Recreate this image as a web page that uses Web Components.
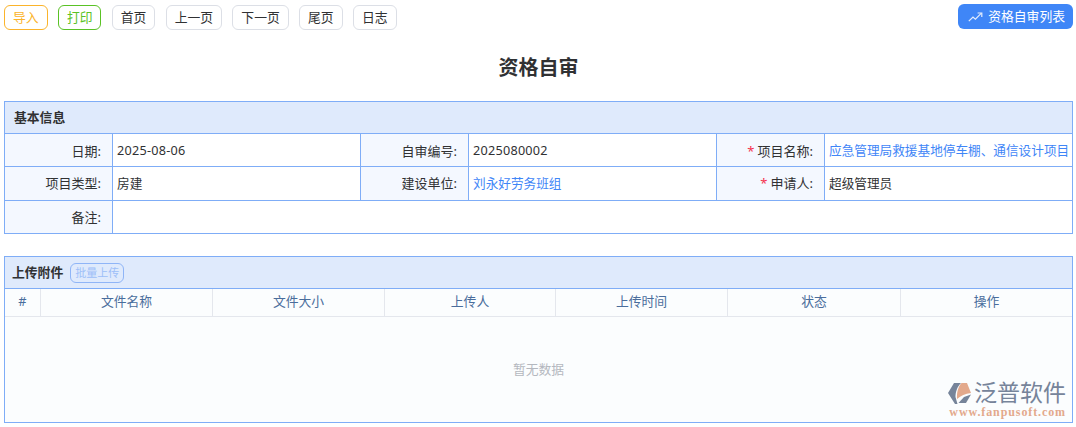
<!DOCTYPE html>
<html lang="zh">
<head>
<meta charset="utf-8">
<title>资格自审</title>
<style>
  html, body { margin: 0; background: #fff; }
  body {
    font: 12.8px/1.4 "Noto Sans", "Noto Sans CJK SC", sans-serif;
    color: #303133;
    height: 427px;
    overflow: hidden;
  }
</style>
</head>
<body>
<audit-page>
  <tool-bar>
    <tool-btn kind="warning">导入</tool-btn>
    <tool-btn kind="success">打印</tool-btn>
    <tool-btn>首页</tool-btn>
    <tool-btn>上一页</tool-btn>
    <tool-btn>下一页</tool-btn>
    <tool-btn>尾页</tool-btn>
    <tool-btn>日志</tool-btn>
    <list-btn slot="end">资格自审列表</list-btn>
  </tool-bar>
  <h-title>资格自审</h-title>
  <info-panel>
    <info-field label="日期" num first>2025-08-06</info-field>
    <info-field label="自审编号" num first>2025080002</info-field>
    <info-field label="项目名称" required link first>应急管理局救援基地停车棚、通信设计项目</info-field>
    <info-field label="项目类型">房建</info-field>
    <info-field label="建设单位" link>刘永好劳务班组</info-field>
    <info-field label="申请人" required>超级管理员</info-field>
    <info-field label="备注" wide></info-field>
  </info-panel>
  <upload-panel></upload-panel>
</audit-page>

<script>
class AuditPage extends HTMLElement {
  constructor() {
    super();
    this.attachShadow({ mode: 'open' }).innerHTML = `
      <style>
        :host { display: flex; flex-direction: column; padding: 4px 3px 0 4px; box-sizing: border-box; height: 427px; }
      </style>
      <slot></slot>`;
  }
}

class ToolBar extends HTMLElement {
  constructor() {
    super();
    this.attachShadow({ mode: 'open' }).innerHTML = `
      <style>
        :host { display: flex; justify-content: space-between; align-items: flex-start; height: 25px; flex: none; }
        .left { display: flex; gap: 10.3px; padding-top: 1px; }
      </style>
      <div class="left"><slot></slot></div>
      <slot name="end"></slot>`;
  }
}

class ToolBtn extends HTMLElement {
  constructor() {
    super();
    this.attachShadow({ mode: 'open' }).innerHTML = `
      <style>
        :host {
          display: flex; align-items: center; justify-content: center;
          box-sizing: border-box; height: 25px; padding: 0 8px 1px;
          border: 1px solid #dcdfe6; border-radius: 6px;
          font-size: 12.8px; line-height: 1; color: #303133; background: #fff; white-space: nowrap;
        }
        :host([kind="warning"]) { border-color: #fbb42b; color: #fbb42b; }
        :host([kind="success"]) { border-color: #5ac225; color: #5ac225; }
      </style>
      <slot></slot>`;
  }
}

class ListBtn extends HTMLElement {
  constructor() {
    super();
    this.attachShadow({ mode: 'open' }).innerHTML = `
      <style>
        :host {
          display: flex; align-items: center; gap: 5px; box-sizing: border-box;
          height: 25px; padding: 0 8px 0 10px; border-radius: 6px;
          background: #3f86f7; color: #fff; font-size: 12.8px; line-height: 1; white-space: nowrap;
        }
        svg { display: block; }
      </style>
      <svg width="15" height="10" viewBox="0 0 15 10" fill="none" stroke="#e3edfd" stroke-width="1.2">
        <path d="M.8 9.2 5 5l2.4 2.2L13.4 1.2"/><path d="M9.6 1h4.2v4"/>
      </svg>
      <slot></slot>`;
  }
}

class HTitle extends HTMLElement {
  constructor() {
    super();
    this.attachShadow({ mode: 'open' }).innerHTML = `
      <style>
        :host { display: block; flex: none; text-align: center; font-size: 20px; line-height: 28px; font-weight: 700; color: #303133; padding: 25px 0 19px; }
      </style>
      <slot></slot>`;
  }
}

class InfoPanel extends HTMLElement {
  constructor() {
    super();
    this.attachShadow({ mode: 'open' }).innerHTML = `
      <style>
        :host { display: block; flex: none; border: 1px solid #7fadf7; }
        .head { height: 31px; line-height: 31px; padding-left: 9px; background: #dfeafc; font-weight: 700; font-size: 12.8px; color: #303133; border-bottom: 1px solid #7fadf7; }
        .grid { display: grid; grid-template-columns: 108px 248px 108px 248px 108px 1fr; grid-template-rows: 33px 34px 32px; }
      </style>
      <div class="head">基本信息</div>
      <div class="grid"><slot></slot></div>`;
  }
}

class InfoField extends HTMLElement {
  constructor() {
    super();
    const star = this.hasAttribute('required') ? '<i>*</i>' : '';
    this.attachShadow({ mode: 'open' }).innerHTML = `
      <style>
        :host { display: grid; grid-template-columns: 108px 1fr; grid-column: span 2; min-width: 0; }
        :host([wide]) { grid-column: 1 / -1; }
        .lab, .val { display: flex; align-items: center; box-sizing: border-box; border-bottom: 1px solid #7fadf7; }
        :host([wide]) .lab, :host([wide]) .val { border-bottom: 0; }
        :host([first]) .lab, :host([first]) .val { padding-top: 2px; }
        .lab { justify-content: flex-end; padding-right: 11px; background: #f4f8ff; border-left: 1px solid #7fadf7; border-right: 1px solid #7fadf7; margin-left: -1px; color: #303133; font-size: 13px; }
        .val { padding-left: 4px; color: #303133; white-space: nowrap; overflow: hidden; font-size: 12.65px; }
        :host([link]) .val { color: #3f86f7; }
        :host([num]) .val { letter-spacing: .25px; }
        i { color: #f5314f; font-style: normal; margin-right: 3px; }
      </style>
      <div class="lab">${star}${this.getAttribute('label')}:</div>
      <div class="val"><slot></slot></div>`;
  }
}

class UploadPanel extends HTMLElement {
  constructor() {
    super();
    const cols = ['#', '文件名称', '文件大小', '上传人', '上传时间', '状态', '操作'];
    this.attachShadow({ mode: 'open' }).innerHTML = `
      <style>
        :host { display: block; flex: none; margin-top: 22px; border: 1px solid #7fadf7; height: 167px; box-sizing: border-box; position: relative; }
        .head { display: flex; align-items: center; gap: 7px; height: 32px; box-sizing: border-box; padding-left: 7px; background: #dfeafc; border-bottom: 1px solid #7fadf7; font-weight: 700; font-size: 12.8px; color: #303133; }
        .batch { font-weight: 400; font-size: 11px; line-height: 18px; padding: 0 4px; border: 1px solid #8fb5f7; border-radius: 6px; color: #9dbff8; }
        .cols { display: grid; grid-template-columns: 35px 172px 172px 171px 172px 173px 1fr; height: 28px; box-sizing: border-box; border-bottom: 1px solid #e4e7ed; background: #fbfdfe; }
        .cols div { display: flex; align-items: center; justify-content: center; padding-bottom: 2px; border-left: 1px solid #e4e7ed; color: #4a6d9c; font-size: 12.8px; }
        .cols div:first-child { border-left: 0; }
        .empty { display: flex; align-items: center; justify-content: center; height: 105px; background: #fbfdfe; color: #b4b8bf; font-size: 12.8px; }
      </style>
      <div class="head">上传附件<span class="batch">批量上传</span></div>
      <div class="cols">${cols.map(c => `<div>${c}</div>`).join('')}</div>
      <div class="empty">暂无数据</div>
      <fanpu-mark></fanpu-mark>`;
  }
}

class FanpuMark extends HTMLElement {
  constructor() {
    super();
    this.attachShadow({ mode: 'open' }).innerHTML = `
      <style>
        :host { position: absolute; right: 6px; bottom: 4px; display: flex; flex-direction: column; align-items: flex-end; }
        .top { display: flex; align-items: center; gap: 1px; height: 25px; }
        .name { font: 23px/25px "Liberation Sans", "Noto Sans CJK SC", sans-serif; color: #76849a; }
        .url { font: 700 12px/12px "Liberation Serif", serif; letter-spacing: .9px; color: #e3a98c; }
        svg { display: block; }
      </style>
      <div class="top">
        <svg width="25" height="24" viewBox="0 0 25 24">
          <path d="M0 11 6 1H13C9 5 7.500 10 7.500 15L9.500 22H7Z" fill="#76849a"/>
          <path d="M13.500 1H19L23 11C17 11.500 13 14 9 17 8.500 11 10 5 13.500 1Z" fill="#e3a98c"/>
          <path d="M10.500 21 16 15 23 12.500 18 21Z" fill="#76849a"/>
        </svg>
        <span class="name">泛普软件</span>
      </div>
      <div class="url">www.fanpusoft.com</div>`;
  }
}

customElements.define('audit-page', AuditPage);
customElements.define('tool-bar', ToolBar);
customElements.define('tool-btn', ToolBtn);
customElements.define('list-btn', ListBtn);
customElements.define('h-title', HTitle);
customElements.define('info-panel', InfoPanel);
customElements.define('info-field', InfoField);
customElements.define('upload-panel', UploadPanel);
customElements.define('fanpu-mark', FanpuMark);
</script>
</body>
</html>
